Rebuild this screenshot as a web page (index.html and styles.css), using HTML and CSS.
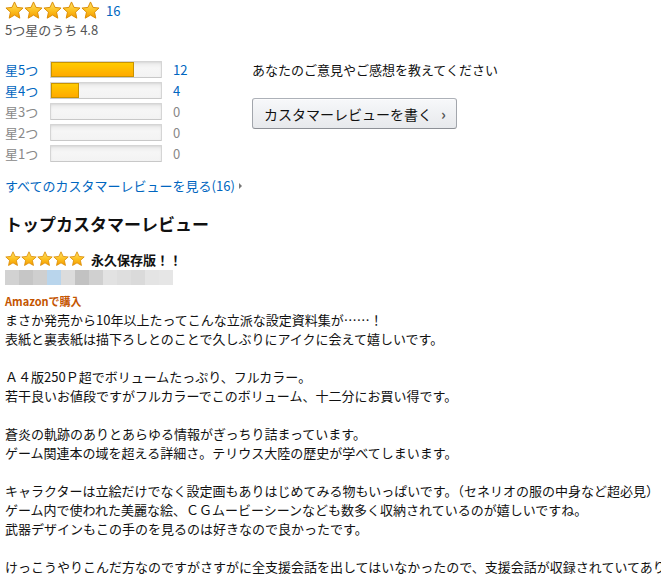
FILE: index.html
```html
<!DOCTYPE html>
<html lang="ja">
<head>
<meta charset="utf-8">
<link rel="stylesheet" href="styles.css">
</head>
<body>
<svg width="0" height="0" class="defs">
  <defs>
    <linearGradient id="g" x1="0" y1="0" x2="0" y2="1">
      <stop offset="0" stop-color="#ffe36b"/>
      <stop offset="0.55" stop-color="#fcbf1e"/>
      <stop offset="1" stop-color="#f49a00"/>
    </linearGradient>
    <symbol id="star" viewBox="0 0 24 24">
      <polygon points="12,1.2 15.2,8.1 22.8,8.9 17.1,14.1 18.7,21.7 12,17.8 5.3,21.7 6.9,14.1 1.2,8.9 8.8,8.1" fill="url(#g)" stroke="#d98a00" stroke-width="1.2" stroke-linejoin="round"/>
    </symbol>
  </defs>
</svg>

<div class="summary">
  <div class="stars-row">
    <span class="stars big">
      <svg><use href="#star"/></svg><svg><use href="#star"/></svg><svg><use href="#star"/></svg><svg><use href="#star"/></svg><svg><use href="#star"/></svg>
    </span>
    <a class="count">16</a>
  </div>
  <div class="rating">5つ星のうち 4.8</div>
</div>

<div class="hist-area">
  <div class="hist">
    <div class="hrow active"><span class="lbl">星5つ</span><span class="bar"><span class="fill" style="width:75%"></span></span><span class="num">12</span></div>
    <div class="hrow active"><span class="lbl">星4つ</span><span class="bar"><span class="fill" style="width:25%"></span></span><span class="num">4</span></div>
    <div class="hrow"><span class="lbl">星3つ</span><span class="bar"></span><span class="num">0</span></div>
    <div class="hrow"><span class="lbl">星2つ</span><span class="bar"></span><span class="num">0</span></div>
    <div class="hrow"><span class="lbl">星1つ</span><span class="bar"></span><span class="num">0</span></div>
  </div>
  <div class="write">
    <div class="ask">あなたのご意見やご感想を教えてください</div>
    <button class="btn">カスタマーレビューを書く<span class="chev">›</span></button>
  </div>
</div>

<a class="all">すべてのカスタマーレビューを見る(16)<span class="tri"></span></a>

<h2 class="heading">トップカスタマーレビュー</h2>

<div class="review">
  <div class="rhead">
    <span class="stars small">
      <svg><use href="#star"/></svg><svg><use href="#star"/></svg><svg><use href="#star"/></svg><svg><use href="#star"/></svg><svg><use href="#star"/></svg>
    </span>
    <span class="rtitle">永久保存版！！</span>
  </div>
  <div class="blur">
    <i class="b1"></i><i class="b2"></i><i class="b3"></i><i class="b4"></i><i class="b5"></i><i class="b6"></i><i class="b7"></i><i class="b8"></i><i class="b9"></i><i class="b10"></i><i class="b11"></i><i class="b12"></i>
  </div>
  <div class="verified">Amazonで購入</div>
  <div class="body">
    <p>まさか発売から10年以上たってこんな立派な設定資料集が……！<br>表紙と裏表紙は描下ろしとのことで久しぶりにアイクに会えて嬉しいです。</p>
    <p>Ａ４版250Ｐ超でボリュームたっぷり、フルカラー。<br>若干良いお値段ですがフルカラーでこのボリューム、十二分にお買い得です。</p>
    <p>蒼炎の軌跡のありとあらゆる情報がぎっちり詰まっています。<br>ゲーム関連本の域を超える詳細さ。テリウス大陸の歴史が学べてしまいます。</p>
    <p>キャラクターは立絵だけでなく設定画もありはじめてみる物もいっぱいです。（セネリオの服の中身など超必見）<br>ゲーム内で使われた美麗な絵、ＣＧムービーシーンなども数多く収納されているのが嬉しいですね。<br>武器デザインもこの手のを見るのは好きなので良かったです。</p>
    <p>けっこうやりこんだ方なのですがさすがに全支援会話を出してはいなかったので、支援会話が収録されていてありがたいです。</p>
  </div>
</div>
</body>
</html>
```
FILE: styles.css
```css
html, body { overflow: hidden; }
body {
  margin: 0;
  padding: 1px 5px 0;
  font-family: "Noto Sans CJK JP", "Noto Sans", sans-serif;
  font-size: 13px;
  line-height: 19px;
  color: #111;
  background: #fff;
}
.defs { position: absolute; }
a { color: #0066c0; text-decoration: none; }

.stars { display: inline-flex; }
.stars svg { display: block; }
.stars.big svg { width: 19px; height: 19px; }
.stars.small svg { width: 16px; height: 16px; }

.stars-row { display: flex; align-items: center; height: 19px; gap: 6px; }
.count { font-size: 13px; line-height: 19px; }
.rating { color: #555; line-height: 20px; margin-top: 0; }

.hist-area { display: flex; margin-top: 19px; }
.hist { width: 247px; }
.hrow { display: flex; align-items: center; height: 21px; color: #888; }
.hrow.active { color: #0066c0; }
.lbl { width: 45px; }
.bar {
  width: 110px; height: 15px;
  border: 1px solid #d5d5d5;
  border-bottom-color: #c8c8c8;
  border-radius: 1px;
  background: linear-gradient(#eaeaea, #f6f6f6 40%, #f3f3f3);
  box-shadow: inset 0 1px 2px rgba(0,0,0,.08);
  position: relative;
  overflow: hidden;
}
.fill {
  position: absolute; left: 0; top: 0; bottom: 0;
  background: linear-gradient(#ffce00, #ffa700);
  box-shadow: inset 0 0 0 1px #c99300;
}
.num { margin-left: 11px; }

.write { padding-top: 0; }
.ask { height: 21px; line-height: 21px; }
.btn {
  display: flex; align-items: center;
  margin-top: 18px;
  height: 31px;
  padding: 0 10px 0 11px;
  font-family: inherit;
  font-size: 14px;
  color: #111;
  background: linear-gradient(#f7f8fa, #e7e9ec);
  border: 1px solid #adb1b8;
  border-color: #adb1b8 #a2a6ac #8d9096;
  border-radius: 3px;
  box-shadow: inset 0 1px 0 rgba(255,255,255,.6);
}
.chev { margin-left: 9px; font-size: 15px; font-weight: bold; color: #555; }

.all { display: flex; align-items: center; margin-top: 12px; line-height: 19px; }
.tri {
  display: inline-block; margin-left: 4px;
  border-left: 3px solid #777;
  border-top: 3px solid transparent;
  border-bottom: 3px solid transparent;
}

.heading { margin: 17px 0 0; font-size: 17px; font-weight: bold; line-height: 24px; color: #111; }

.review { margin-top: 14px; }
.rhead { display: flex; align-items: center; height: 18px; gap: 6px; }
.rtitle { font-weight: bold; font-size: 13px; }
.blur { display: flex; margin-top: 2px; height: 15px; width: 168px; }
.blur i { flex: 1; }
.b1 { background: #d2d2d2; } .b2 { background: #c6c6c6; } .b3 { background: #cfcfcf; }
.b4 { background: #b9d5ec; } .b5 { background: #dcdcdc; } .b6 { background: #c2c2c2; }
.b7 { background: #d0d0d0; } .b8 { background: #e2e2e2; } .b9 { background: #dedede; }
.b10 { background: #dadada; } .b11 { background: #e4e4e4; } .b12 { background: #e6e6e6; }

.verified { margin-top: 8px; font-size: 11px; line-height: 16px; font-weight: bold; color: #c45500; }
.body { margin-top: 1px; white-space: nowrap; }
.body p { margin: 0 0 19px; }
```
